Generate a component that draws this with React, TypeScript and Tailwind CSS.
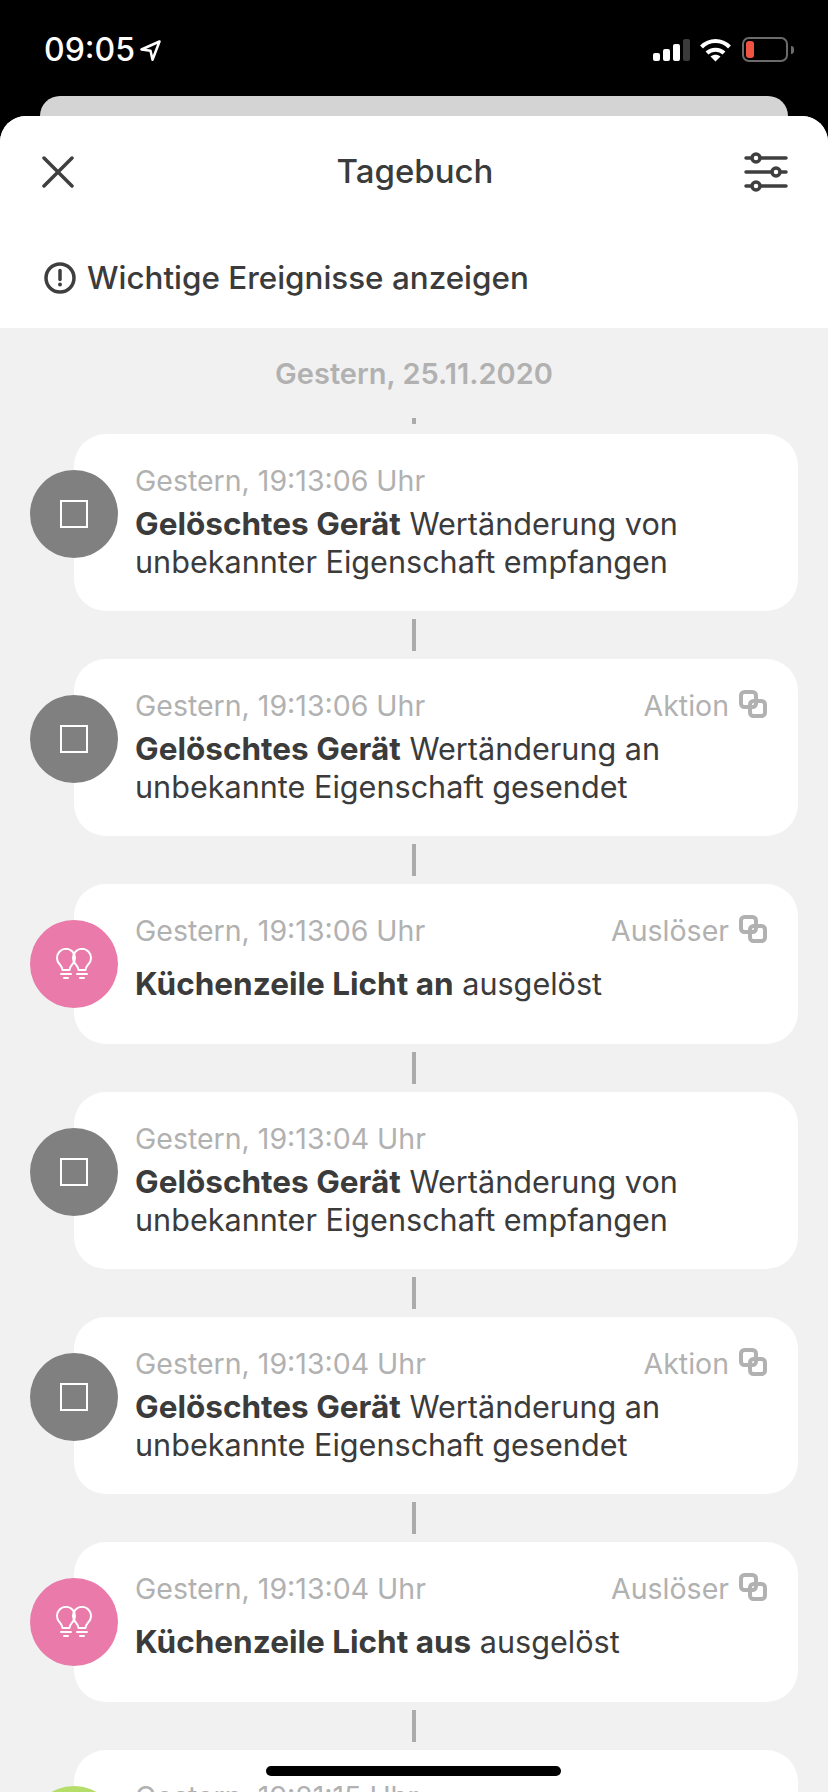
const font = "font-['Inter','Liberation_Sans',sans-serif]";

type Entry = {
  time: string;
  tag?: string;
  title: string;
  rest: string;
  kind: "device" | "scene";
};

const entries: Entry[] = [
  { time: "Gestern, 19:13:06 Uhr", title: "Gelöschtes Gerät", rest: " Wertänderung von unbekannter Eigenschaft empfangen", kind: "device" },
  { time: "Gestern, 19:13:06 Uhr", tag: "Aktion", title: "Gelöschtes Gerät", rest: " Wertänderung an unbekannte Eigenschaft gesendet", kind: "device" },
  { time: "Gestern, 19:13:06 Uhr", tag: "Auslöser", title: "Küchenzeile Licht an", rest: " ausgelöst", kind: "scene" },
  { time: "Gestern, 19:13:04 Uhr", title: "Gelöschtes Gerät", rest: " Wertänderung von unbekannter Eigenschaft empfangen", kind: "device" },
  { time: "Gestern, 19:13:04 Uhr", tag: "Aktion", title: "Gelöschtes Gerät", rest: " Wertänderung an unbekannte Eigenschaft gesendet", kind: "device" },
  { time: "Gestern, 19:13:04 Uhr", tag: "Auslöser", title: "Küchenzeile Licht aus", rest: " ausgelöst", kind: "scene" },
];

function Bulbs() {
  return (
    <svg width="36" height="32" viewBox="0 0 36 32" fill="none" stroke="white" strokeWidth="2" strokeLinecap="round" strokeLinejoin="round">
      <path d="M6.5 22C6.5 19.5 5 18 3.6 16.2A9 9 0 1 1 16.4 16.2C15 18 13.5 19.5 13.5 22Z" />
      <path d="M22.5 22C22.5 19.5 21 18 19.6 16.2A9 9 0 1 1 32.4 16.2C31 18 29.5 19.5 29.5 22Z" />
      <path d="M5 26H15M8 30H12M21 26H31M24 30H28" />
    </svg>
  );
}

function CopyIcon() {
  return (
    <svg width="28" height="28" viewBox="0 0 28 28" fill="none" stroke="#b1b1b1" strokeWidth="4" className="mb-[4px]">
      <rect x="2" y="2" width="15" height="15" rx="3.5" />
      <rect x="11" y="11" width="15" height="15" rx="3.5" />
    </svg>
  );
}

function Card({ entry }: { entry: Entry }) {
  const isScene = entry.kind === "scene";
  return (
    <div className={`ml-[74px] mr-[30px] flex rounded-[32px] bg-white ${isScene ? "h-[160px]" : "h-[177px]"}`}>
      <div
        className={`-ml-[44px] mt-[36px] flex h-[88px] w-[88px] shrink-0 items-center justify-center rounded-full ${
          isScene ? "bg-[#e97aa9]" : "bg-[#808080]"
        }`}
      >
        {isScene ? <Bulbs /> : <div className="h-[28px] w-[28px] border-2 border-white" />}
      </div>
      <div className="ml-[17px] flex-1 pr-[31px] pt-[32px]">
        <div className="flex h-[30px] items-center justify-between text-[28.5px] text-[#b1b1b1]">
          <span>{entry.time}</span>
          {entry.tag && (
            <span className="flex items-center gap-[10px]">
              {entry.tag}
              <CopyIcon />
            </span>
          )}
        </div>
        <p className={`text-[30.6px] leading-[38px] text-[#3b3b3b] ${isScene ? "mt-[19px]" : "mt-[9px]"}`}>
          <span className="text-[31.5px] font-bold">{entry.title}</span>
          {entry.rest}
        </p>
      </div>
    </div>
  );
}

function Connector() {
  return <div className="mx-auto my-[8px] h-[32px] w-[4px] bg-[#ababab]" />;
}

export default function App() {
  return (
    <div className={`relative h-[1792px] w-[828px] overflow-hidden bg-black ${font}`}>
      {/* status bar */}
      <div className="flex h-[96px] items-start justify-between pl-[44px] pr-[34px] pt-[32px]">
        <div className="flex items-center gap-[5px] text-[32px] leading-[36px] font-medium text-white">
          09:05
          <svg width="21" height="21" viewBox="0 0 21 21" fill="none" stroke="white" strokeWidth="2.5" strokeLinejoin="round">
            <path d="M19.5 1.5 1.5 9.5l9 1.3 2 9z" />
          </svg>
        </div>
        <div className="flex items-center pt-[5px]">
          <div className="mr-[10px] flex items-end gap-[3px]">
            <div className="h-[8px] w-[7px] rounded-[2px] bg-white" />
            <div className="h-[12px] w-[7px] rounded-[2px] bg-white" />
            <div className="h-[17px] w-[7px] rounded-[2px] bg-white" />
            <div className="h-[22px] w-[7px] rounded-[2px] bg-[#3a3a3a]" />
          </div>
          <svg width="31" height="24" viewBox="0 0 31 24" fill="none" stroke="white" strokeWidth="4" className="mr-[11px]">
            <path d="M1.5 9C9.5 1 21.5 1 29.5 9" />
            <path d="M7 15C11.5 10.5 19.5 10.5 24 15" />
            <path d="M15.5 23.5 10.5 18.5C13.5 16 17.5 16 20.5 18.5Z" fill="white" stroke="none" />
          </svg>
          <div className="flex items-center gap-[3px]">
            <div className="h-[25px] w-[46px] rounded-[7px] border-2 border-[#6b6b6b] p-[2px]">
              <div className="h-full w-[8px] rounded-[3px] bg-[#ee5343]" />
            </div>
            <div className="h-[8px] w-[3px] rounded-r-full bg-[#6b6b6b]" />
          </div>
        </div>
      </div>

      {/* sheet behind */}
      <div className="mx-[40px] h-[30px] rounded-t-[20px] bg-[#d4d4d4]" />

      {/* sheet */}
      <div className="-mt-[10px] h-full rounded-t-[26px] bg-[#f1f1f1]">
        <div className="rounded-t-[26px] bg-white">
          <div className="grid h-[112px] grid-cols-[1fr_auto_1fr] items-center pl-[42px] pr-[40px]">
            <svg width="32" height="32" viewBox="0 0 32 32" stroke="#3f3f3f" strokeWidth="3.5" strokeLinecap="round">
              <path d="M2 2l28 28M30 2 2 30" />
            </svg>
            <span className="text-[33px] font-medium text-[#3b3b3b]">Tagebuch</span>
            <svg width="44" height="40" viewBox="0 0 44 40" fill="none" stroke="#3f3f3f" strokeWidth="3.5" strokeLinecap="round" className="justify-self-end">
              <path d="M2 6H42M2 20H42M2 34H42" />
              <circle cx="12" cy="6" r="4" fill="white" />
              <circle cx="32" cy="20" r="4" fill="white" />
              <circle cx="12" cy="34" r="4" fill="white" />
            </svg>
          </div>
          <div className="flex h-[100px] items-start gap-[11px] pl-[44px] pt-[32px] text-[31.4px] leading-[36px] font-medium text-[#3b3b3b]">
            <svg width="32" height="32" viewBox="0 0 32 32" fill="none" className="mt-[2px]">
              <circle cx="16" cy="16" r="14" stroke="#3f3f3f" strokeWidth="3.5" />
              <path d="M16 8.5v9" stroke="#3f3f3f" strokeWidth="3.5" strokeLinecap="round" />
              <circle cx="16" cy="22.5" r="2" fill="#3f3f3f" />
            </svg>
            Wichtige Ereignisse anzeigen
          </div>
        </div>

        <div className="pt-[30px] text-center text-[29px] leading-[32px] font-semibold text-[#b1b1b1]">
          Gestern, 25.11.2020
        </div>
        <div className="mx-auto mt-[28px] mb-[10px] h-[6px] w-[4px] bg-[#ababab]" />

        {entries.map((entry, index) => (
          <div key={index}>
            <Card entry={entry} />
            <Connector />
          </div>
        ))}

        <div className="ml-[74px] mr-[30px] flex h-[177px] rounded-[32px] bg-white">
          <div className="-ml-[44px] mt-[36px] h-[88px] w-[88px] shrink-0 rounded-full bg-[#b5dd6a]" />
          <div className="ml-[17px] pt-[32px] text-[28.5px] leading-[30px] text-[#b1b1b1]">Gestern, 19:21:15 Uhr</div>
        </div>
      </div>

      {/* home indicator */}
      <div className="absolute bottom-[16px] left-[266px] h-[10px] w-[295px] rounded-full bg-black" />
    </div>
  );
}
